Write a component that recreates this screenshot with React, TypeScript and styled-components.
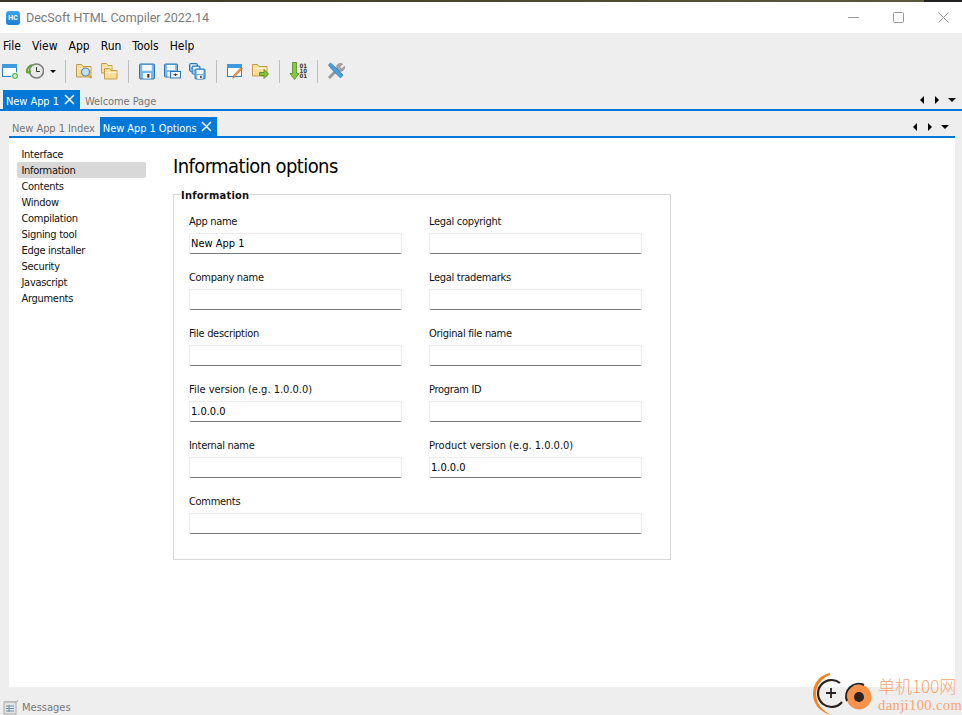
import React from "react";
import styled, { createGlobalStyle } from "styled-components";

const Global = createGlobalStyle`
  html, body { margin: 0; padding: 0; height: 100%; background: #eeeeee; }
  #root { height: 100%; }
  * { box-sizing: border-box; }
`;

const Page = styled.div`
  position: relative;
  width: 962px;
  height: 715px;
  overflow: hidden;
  display: flex;
  flex-direction: column;
  background: #eeeeee;
  font-family: "DejaVu Sans Condensed", "DejaVu Sans", sans-serif;
  font-stretch: condensed;
  font-size: 11px;
  color: #111;
`;
const TopEdge = styled.div`
  height: 2px;
  background: linear-gradient(90deg, #3d3428 0, #4c4a30 60%, #5a5a3a 96%, #222 96%);
`;
const TitleBar = styled.div`
  height: 31px;
  background: #fff;
  display: flex;
  align-items: center;
  padding-left: 6px;
  color: #7b7b7b;
  font-family: Roboto, "Liberation Sans", sans-serif;
  font-stretch: normal;
  font-size: 12.5px;
`;
const AppLogo = styled.div`
  width: 14px;
  height: 14px;
  border-radius: 3px;
  background: linear-gradient(#3aa4ee, #1a7fd6);
  color: #fff;
  font-size: 7px;
  font-weight: 700;
  display: flex;
  align-items: center;
  justify-content: center;
  margin-right: 6px;
`;
const TitleText = styled.span`
  flex: 1;
`;
const WinButtons = styled.div`
  display: flex;
  gap: 34px;
  padding-right: 13px;
`;
const MenuBar = styled.div`
  height: 24px;
  display: flex;
  align-items: center;
  padding: 2px 0 0 3px;
  gap: 11px;
  font-size: 12px;
  color: #000;
`;
const Toolbar = styled.div`
  height: 28px;
  display: flex;
  align-items: center;
  padding-left: 1px;
  gap: 7px;
`;
const ToolIcon = styled.svg`
  width: 18px;
  height: 18px;
  display: block;
  flex: none;
`;
const DropArrow = styled.span`
  width: 0;
  height: 0;
  margin: 1px -1px 0 -1px;
  border-left: 3px solid transparent;
  border-right: 3px solid transparent;
  border-top: 3px solid #000;
`;
const Sep = styled.span`
  width: 1px;
  height: 23px;
  background: #bdbdbd;
  margin: 0 2px 0 3px;
`;
const TabRow = styled.div<{ $h: number; $top: number; $left: number; $right: number }>`
  height: ${(p) => p.$h}px;
  padding-top: ${(p) => p.$top}px;
  margin: 0 ${(p) => p.$right}px 0 ${(p) => p.$left}px;
  display: flex;
  align-items: stretch;
  border-bottom: 2px solid #0078d7;
`;
const TabInset = styled.div<{ $w: number }>`
  width: ${(p) => p.$w}px;
`;
const Tab = styled.div<{ $active?: boolean }>`
  display: flex;
  align-items: center;
  gap: 5px;
  padding: 3px ${(p) => (p.$active ? 5 : 3)}px 0 3px;
  margin-right: ${(p) => (p.$active ? 0 : 2)}px;
  background: ${(p) => (p.$active ? "#0078d7" : "transparent")};
  color: ${(p) => (p.$active ? "#fff" : "#777")};
  font-size: 11px;
  letter-spacing: -0.07px;
  white-space: nowrap;
`;
const TabClose = styled.svg`
  display: block;
  margin-top: -3px;
`;
const TabSpacer = styled.div`
  flex: 1;
`;
const Scrollers = styled.div`
  display: flex;
  align-items: center;
  gap: 11px;
  padding-right: 6px;
`;
const ArrowL = styled.span`
  width: 0; height: 0;
  border-top: 4px solid transparent;
  border-bottom: 4px solid transparent;
  border-right: 4px solid #000;
`;
const ArrowR = styled.span`
  width: 0; height: 0;
  border-top: 4px solid transparent;
  border-bottom: 4px solid transparent;
  border-left: 4px solid #000;
`;
const ArrowD = styled.span`
  width: 0; height: 0;
  margin-left: -2px;
  border-left: 4px solid transparent;
  border-right: 4px solid transparent;
  border-top: 4px solid #000;
`;
const Content = styled.div`
  flex: 1;
  margin: 0 7px 0 9px;
  background: #fff;
  display: flex;
  min-height: 0;
`;
const Sidebar = styled.ul`
  list-style: none;
  margin: 8px 0 0 8px;
  padding: 0;
  width: 129px;
  flex: none;
`;
const SideItem = styled.li<{ $active?: boolean }>`
  height: 16px;
  line-height: 18px;
  padding-left: 4.5px;
  font-size: 11px;
  letter-spacing: -0.3px;
  border-radius: 2px;
  background: ${(p) => (p.$active ? "#d8d8d8" : "transparent")};
`;
const Main = styled.div`
  margin-left: 27px;
  width: 498px;
`;
const Heading = styled.h1`
  margin: 14px 0 6px;
  font-size: 20px;
  line-height: 29px;
  font-weight: 400;
  letter-spacing: -0.6px;
  color: #000;
`;
const Group = styled.fieldset`
  margin: 0;
  padding: 13px 15px 0;
  height: 373px;
  border: 1px solid #d9d9d9;
  min-width: 0;
`;
const GroupTitle = styled.legend`
  position: relative;
  top: 2px;
  padding: 0;
  margin-left: -8px;
  font-size: 11px;
  line-height: 14px;
  font-weight: 700;
  letter-spacing: 0.25px;
`;
const FormGrid = styled.div`
  display: grid;
  grid-template-columns: 213px 213px;
  column-gap: 27px;
  row-gap: 16px;
`;
const Field = styled.label<{ $wide?: boolean }>`
  display: flex;
  flex-direction: column;
  gap: 5px;
  height: 40px;
  font-size: 11px;
  grid-column: ${(p) => (p.$wide ? "1 / 3" : "auto")};
  width: ${(p) => (p.$wide ? "453px" : "auto")};
`;
const FieldLabel = styled.span<{ $digits?: boolean }>`
  line-height: 16px;
  height: 14px;
  letter-spacing: ${(p) => (p.$digits ? 0 : -0.3)}px;
`;
const TextInput = styled.input`
  height: 21px;
  width: 100%;
  border: 1px solid #ececec;
  border-bottom: 1px solid #7a7a7a;
  border-radius: 2px;
  padding: 0 1px;
  background: #fff;
  font: inherit;
  font-size: 11px;
  color: #000;
  outline: none;
`;
const StatusBar = styled.div`
  height: 28px;
  display: flex;
  align-items: center;
  padding: 12px 0 0 3px;
  gap: 3px;
  color: #777;
  font-size: 11px;
`;
const Watermark = styled.div`
  position: absolute;
  left: 813px;
  top: 672px;
  display: flex;
  align-items: center;
  gap: 3px;
`;
const WatermarkText = styled.div`
  display: flex;
  flex-direction: column;
  gap: 3px;
  color: #f9a56f;
  font-family: "Liberation Serif", "Noto Sans CJK SC", serif;
  font-stretch: normal;
`;
const WmCn = styled.span`
  font-family: "Noto Sans CJK SC", sans-serif;
  font-size: 17px;
  line-height: 19px;
  font-weight: 300;
`;
const WmEn = styled.span`
  font-size: 14.5px;
  line-height: 14px;
  letter-spacing: 0.4px;
`;
const BinaryDigits = styled.text`
  font-family: "DejaVu Sans", sans-serif;
  font-size: 6px;
  font-weight: 700;
  fill: #333;
`;

const Ico = ({ children }: { children: React.ReactNode }) => (
  <ToolIcon viewBox="0 0 18 18">{children}</ToolIcon>
);

const Folder = ({ x = 1, y = 3, w = 14, h = 11 }) => (
  <g>
    <path d={`M${x + .5} ${y + h}V${y + .5}h5l1.5 2h${w - 7}V${y + h}z`} fill="#f9dc96" stroke="#c79a4e" strokeWidth="1" />
    <path d={`M${x + 1.5} ${y + 4.5}h${w - 2}`} stroke="#fdf3d2" strokeWidth="1.4" />
  </g>
);
const Floppy = ({ x = 1, y = 2, s = 14 }) => (
  <g>
    <rect x={x + .5} y={y + .5} width={s - 1} height={s - 1} rx="1" fill="#79b8e6" stroke="#2a76b5" strokeWidth="1" />
    <rect x={x + s * 0.2} y={y + 1.5} width={s * 0.6} height={s * 0.36} fill="#f2f7fc" />
    <rect x={x + s * 0.25} y={y + s * 0.6} width={s * 0.5} height={s * 0.34} fill="#f5f5f5" />
    <rect x={x + s * 0.52} y={y + s * 0.66} width={s * 0.13} height={s * 0.22} fill="#333" />
  </g>
);
const Win = ({ x = 1, y = 3, w = 14, h = 11 }) => (
  <g>
    <rect x={x + .5} y={y + .5} width={w - 1} height={h - 1} fill="#fff" stroke="#2a82c6" strokeWidth="1" />
    <rect x={x} y={y} width={w} height="4" fill="#3c9bdf" />
  </g>
);

const Close = () => (
  <TabClose width="11" height="11" viewBox="0 0 11 11">
    <path d="M1 1l9 9M10 1l-9 9" stroke="#fff" strokeWidth="1.5" />
  </TabClose>
);

const fields: { label: string; value?: string; wide?: boolean }[] = [
  { label: "App name", value: "New App 1" },
  { label: "Legal copyright" },
  { label: "Company name" },
  { label: "Legal trademarks" },
  { label: "File description" },
  { label: "Original file name" },
  { label: "File version (e.g. 1.0.0.0)", value: "1.0.0.0" },
  { label: "Program ID" },
  { label: "Internal name" },
  { label: "Product version (e.g. 1.0.0.0)", value: "1.0.0.0" },
  { label: "Comments", wide: true },
];

const sections = ["Interface", "Information", "Contents", "Window", "Compilation", "Signing tool", "Edge installer", "Security", "Javascript", "Arguments"];

export default function App() {
  return (
    <Page>
      <Global />
      <TopEdge />
      <TitleBar>
        <AppLogo>HC</AppLogo>
        <TitleText>DecSoft HTML Compiler 2022.14</TitleText>
        <WinButtons>
          <svg width="11" height="11" viewBox="0 0 11 11"><path d="M0 5.5h11" stroke="#999" /></svg>
          <svg width="11" height="11" viewBox="0 0 11 11"><rect x=".5" y=".5" width="10" height="10" rx="1" fill="none" stroke="#999" /></svg>
          <svg width="11" height="11" viewBox="0 0 11 11"><path d="M.5.5l10 10M10.500.5l-10 10" stroke="#999" /></svg>
        </WinButtons>
      </TitleBar>
      <MenuBar>
        {["File", "View", "App", "Run", "Tools", "Help"].map((m) => <span key={m}>{m}</span>)}
      </MenuBar>
      <Toolbar>
        <Ico><Win x={1} y={2} w={15} h={13} /><circle cx="14" cy="14" r="3.600" fill="#5cb85c" stroke="#fff" /><path d="M12 14h4M14 12v4" stroke="#fff" /></Ico>
        <Ico>
          <circle cx="10.500" cy="9" r="7" fill="#e9e9e9" stroke="#7d7d7d" strokeWidth="1.600" />
          <path d="M10.500 5V9.500h3.500" stroke="#333" fill="none" />
          <path d="M1.500 11a6 6 0 0 1 5-8M1.500 11L-.5 7.500M1.500 11l3.500-2" stroke="#5fa52f" strokeWidth="2" fill="none" />
        </Ico>
        <DropArrow />
        <Sep />
        <Ico><Folder x={1} y={2} w={15} h={13} /><circle cx="10.500" cy="10" r="4" fill="#bfe0f6" stroke="#5b8db3" strokeWidth="1.200" /><path d="M13.500 13l3 3" stroke="#e0a030" strokeWidth="2" /></Ico>
        <Ico><Folder x={1} y={1} w={11} h={10} /><Folder x={4} y={6} w={13} h={11} /></Ico>
        <Sep />
        <Ico><Floppy x={1} y={1.500} s={16} /></Ico>
        <Ico><Floppy x={1} y={1.500} s={14} /><rect x="7.500" y="9.500" width="10" height="6.500" fill="#f5f5f5" stroke="#2a76b5" /><path d="M10.500 12.700h4M12.500 11.500v2.500" stroke="#333" /></Ico>
        <Ico><Floppy x={1} y={1} s={9} /><Floppy x={3.500} y={3.500} s={9} /><Floppy x={6.500} y={6.500} s={11} /></Ico>
        <Sep />
        <Ico><Win x={1} y={2} w={15} h={13} /><path d="M16.500 6.500l-7 7.500-2.500 2.500.8-3.300 7-7.500z" fill="#f0a24a" stroke="#b5652a" strokeWidth=".7" /></Ico>
        <Ico><Folder x={1} y={2} w={15} h={12} /><path d="M8.500 10.500h4.500V7.500l4.500 4.500-4.500 4.500v-3H8.500z" fill="#86c13f" stroke="#4c8a1f" strokeWidth=".8" /></Ico>
        <Sep />
        <Ico>
          <path d="M3.500.5v11H1l4.500 6 4.500-6H7.500V.5z" fill="#8cc63f" stroke="#4c8a1f" strokeWidth=".8" />
          <BinaryDigits x="10.500" y="5.500">01</BinaryDigits>
          <BinaryDigits x="10.500" y="10.800">10</BinaryDigits>
          <BinaryDigits x="10.500" y="16">01</BinaryDigits>
        </Ico>
        <Sep />
        <Ico>
          <path d="M2 16L11 7" stroke="#9a9a9a" strokeWidth="3" fill="none" />
          <path d="M9.500 5a4 4 0 0 1 6-3l-3 3 2 2 3-2.500a4 4 0 0 1-5.500 4.500z" fill="#a5a5a5" stroke="#777" strokeWidth=".6" />
          <path d="M1.500 3l2-2 3 2.500 9.500 9.500-2.500 3L4 6.500z" fill="#4a9edc" stroke="#2a76b5" strokeWidth=".7" />
        </Ico>
      </Toolbar>
      <TabRow $h={26} $top={5} $left={0} $right={0}>
        <TabInset $w={3} />
        <Tab $active>New App 1 <Close /></Tab>
        <TabInset $w={2} />
        <Tab>Welcome Page</Tab>
        <TabSpacer />
        <Scrollers><ArrowL /><ArrowR /><ArrowD /></Scrollers>
      </TabRow>
      <TabRow $h={27} $top={6} $left={9} $right={7}>
        <Tab>New App 1 Index</Tab>
        <Tab $active>New App 1 Options <Close /></Tab>
        <TabSpacer />
        <Scrollers><ArrowL /><ArrowR /><ArrowD /></Scrollers>
      </TabRow>
      <Content>
        <Sidebar>
          {sections.map((s) => <SideItem key={s} $active={s === "Information"}>{s}</SideItem>)}
        </Sidebar>
        <Main>
          <Heading>Information options</Heading>
          <Group>
            <GroupTitle>Information</GroupTitle>
            <FormGrid>
              {fields.map((f) => (
                <Field key={f.label} $wide={f.wide}>
                  <FieldLabel $digits={f.label.includes("(")}>{f.label}</FieldLabel>
                  <TextInput readOnly value={f.value ?? ""} />
                </Field>
              ))}
            </FormGrid>
          </Group>
        </Main>
      </Content>
      <StatusBar>
        <svg width="16" height="16" viewBox="0 0 16 16">
          <path d="M1 3h13l1-2" fill="none" stroke="#aaa" />
          <rect x="1" y="3" width="12" height="12" fill="#e4e4e4" stroke="#aaa" />
          <path d="M3 7h8M3 9.500h8M3 12h8M6 6v7" stroke="#6f8fb0" />
        </svg>
        Messages
      </StatusBar>
      <Watermark>
        <svg width="62" height="44" viewBox="0 0 62 44">
          <path d="M17 1C7 3 0 11 0 22c0 10 7 18 18 21-7-4-15-10-15-21 0-9 6-16 14-19z" fill="#f58220" />
          <path d="M27 11A13.500 13.500 0 1 0 29 30" fill="none" stroke="#2a2320" strokeWidth="2.200" />
          <path d="M13 21h10M18 16v10" stroke="#2a2320" strokeWidth="1.800" />
          <circle cx="46" cy="25" r="12.500" fill="#f9924a" />
          <path d="M34 29a12.500 12.500 0 0 1 17-16" fill="none" stroke="#2a2320" strokeWidth="2" />
          <circle cx="46" cy="25" r="5" fill="#2a2320" />
        </svg>
        <WatermarkText>
          <WmCn>单机100网</WmCn>
          <WmEn>danji100.com</WmEn>
        </WatermarkText>
      </Watermark>
    </Page>
  );
}
